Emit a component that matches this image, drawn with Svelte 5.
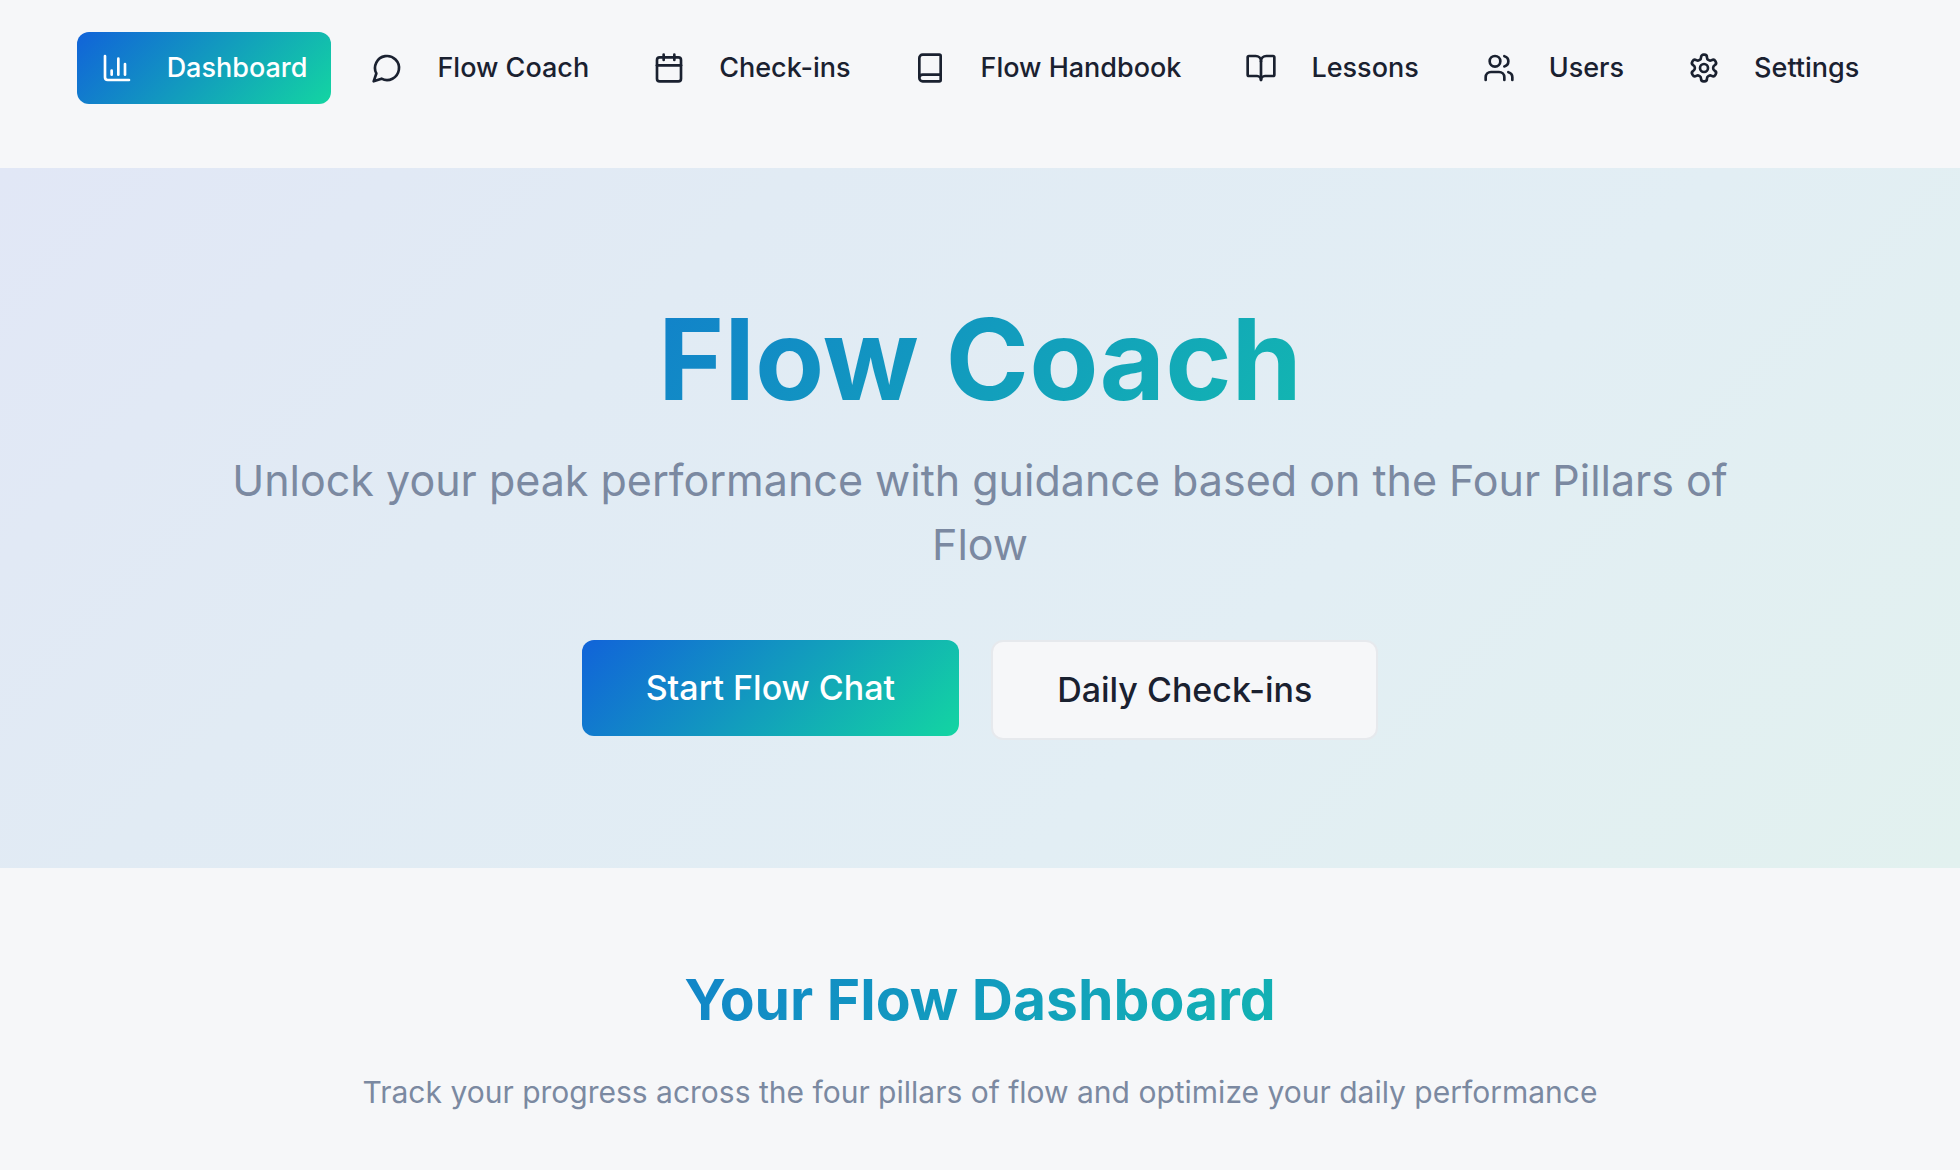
<script>
  const items = [
    {
      label: 'Dashboard',
      active: true,
      paths: ['M3 3v16a2 2 0 0 0 2 2h16', 'M18 17V9', 'M13 17V5', 'M8 17v-3']
    },
    { label: 'Flow Coach', paths: ['M7.9 20A9 9 0 1 0 4 16.1L2 22Z'] },
    {
      label: 'Check-ins',
      paths: [
        'M8 2v4',
        'M16 2v4',
        'M5 4h14a2 2 0 0 1 2 2v14a2 2 0 0 1-2 2H5a2 2 0 0 1-2-2V6a2 2 0 0 1 2-2z',
        'M3 10h18'
      ]
    },
    {
      label: 'Flow Handbook',
      paths: [
        'M4 19.5v-15A2.5 2.5 0 0 1 6.5 2H19a1 1 0 0 1 1 1v18a1 1 0 0 1-1 1H6.500a1 1 0 0 1 0-5H20'
      ]
    },
    {
      label: 'Lessons',
      paths: [
        'M12 7v14',
        'M3 18a1 1 0 0 1-1-1V4a1 1 0 0 1 1-1h5a4 4 0 0 1 4 4 4 4 0 0 1 4-4h5a1 1 0 0 1 1 1v13a1 1 0 0 1-1 1h-6a3 3 0 0 0-3 3 3 3 0 0 0-3-3z'
      ]
    },
    {
      label: 'Users',
      paths: [
        'M16 21v-2a4 4 0 0 0-4-4H6a4 4 0 0 0-4 4v2',
        'M5 7a4 4 0 1 0 8 0a4 4 0 1 0-8 0',
        'M22 21v-2a4 4 0 0 0-3-3.87',
        'M16 3.13a4 4 0 0 1 0 7.75'
      ]
    },
    {
      label: 'Settings',
      paths: [
        'M12.22 2h-.44a2 2 0 0 0-2 2v.18a2 2 0 0 1-1 1.73l-.43.25a2 2 0 0 1-2 0l-.15-.08a2 2 0 0 0-2.73.73l-.22.38a2 2 0 0 0 .73 2.73l.15.1a2 2 0 0 1 1 1.72v.51a2 2 0 0 1-1 1.74l-.15.09a2 2 0 0 0-.73 2.73l.22.38a2 2 0 0 0 2.73.73l.15-.08a2 2 0 0 1 2 0l.43.25a2 2 0 0 1 1 1.73V20a2 2 0 0 0 2 2h.44a2 2 0 0 0 2-2v-.18a2 2 0 0 1 1-1.73l.43-.25a2 2 0 0 1 2 0l.15.08a2 2 0 0 0 2.73-.73l.22-.39a2 2 0 0 0-.73-2.73l-.15-.08a2 2 0 0 1-1-1.74v-.5a2 2 0 0 1 1-1.74l.15-.09a2 2 0 0 0 .73-2.73l-.22-.38a2 2 0 0 0-2.73-.73l-.15.08a2 2 0 0 1-2 0l-.43-.25a2 2 0 0 1-1-1.73V4a2 2 0 0 0-2-2z',
        'M9 12a3 3 0 1 0 6 0a3 3 0 1 0-6 0'
      ]
    }
  ];
</script>

<div class="page">
  <nav class="nav" aria-label="Main">
    {#each items as item}
      <button type="button" class="tab" class:active={item.active} aria-current={item.active ? 'page' : undefined}>
        <svg viewBox="0 0 24 24" aria-hidden="true">
          {#each item.paths as d}
            <path {d} />
          {/each}
        </svg>
        {item.label}
      </button>
    {/each}
  </nav>

  <main>
    <section class="hero">
      <div class="inner">
        <h1>Flow Coach</h1>
        <p class="lead">Unlock your peak performance with guidance based on the Four Pillars of Flow</p>
        <div class="actions">
          <button type="button" class="cta primary">Start Flow Chat</button>
          <button type="button" class="cta outline">Daily Check-ins</button>
        </div>
      </div>
    </section>

    <section class="dashboard">
      <div class="inner">
        <h2>Your Flow Dashboard</h2>
        <p class="sub">Track your progress across the four pillars of flow and optimize your daily performance</p>
      </div>
    </section>
  </main>
</div>

<style>
  :global(body) {
    margin: 0;
    background: #f6f7f9;
  }

  .page {
    --ink: #1a2130;
    --muted: #7b89a1;
    --brand: linear-gradient(135deg, #1163d9, #13d5a2);
    color: var(--ink);
    font-family: Inter, sans-serif;
  }

  .nav {
    display: flex;
    justify-content: center;
    gap: 16px;
    padding: 32px 48px 64px;
  }

  .tab {
    display: flex;
    align-items: center;
    gap: 34px;
    height: 72px;
    padding: 0 24px;
    border: 0;
    border-radius: 12px;
    background: none;
    color: inherit;
    font: 500 27px/40px Inter, sans-serif;
    white-space: nowrap;
    cursor: pointer;
  }

  .tab svg {
    flex: none;
    width: 32px;
    height: 32px;
    fill: none;
    stroke: currentColor;
    stroke-width: 2;
    stroke-linecap: round;
    stroke-linejoin: round;
  }

  .tab.active {
    background: var(--brand);
    color: #fff;
  }

  .hero {
    padding: 128px 32px;
    background: linear-gradient(135deg, #e1e7f6, #e1ebf4 30%, #e2eef4 65%, #e2f1ef);
  }

  .inner {
    max-width: 1536px;
    margin: 0 auto;
    text-align: center;
  }

  h1,
  h2 {
    margin: 0;
    background: var(--brand);
    background-clip: text;
    color: transparent;
    font-weight: 700;
  }

  h1 {
    margin-bottom: 26px;
    font-size: 113px;
    line-height: 126px;
  }

  .lead {
    margin: 0 0 64px;
    color: var(--muted);
    font-size: 43px;
    line-height: 64px;
  }

  .actions {
    display: flex;
    justify-content: center;
    align-items: flex-start;
    gap: 32px;
  }

  .cta {
    padding: 20px 64px;
    border: 0;
    border-radius: 12px;
    color: #fff;
    font: 500 34px/56px Inter, sans-serif;
    cursor: pointer;
  }

  .primary {
    background: var(--brand);
  }

  .outline {
    border: 2px solid #e6e9ed;
    background: #f6f7f9;
    color: var(--ink);
  }

  .dashboard {
    padding: 96px 32px;
  }

  h2 {
    margin-bottom: 32px;
    font-size: 57px;
    line-height: 72px;
  }

  .sub {
    margin: 0;
    color: var(--muted);
    font-size: 30px;
    line-height: 48px;
  }
</style>
